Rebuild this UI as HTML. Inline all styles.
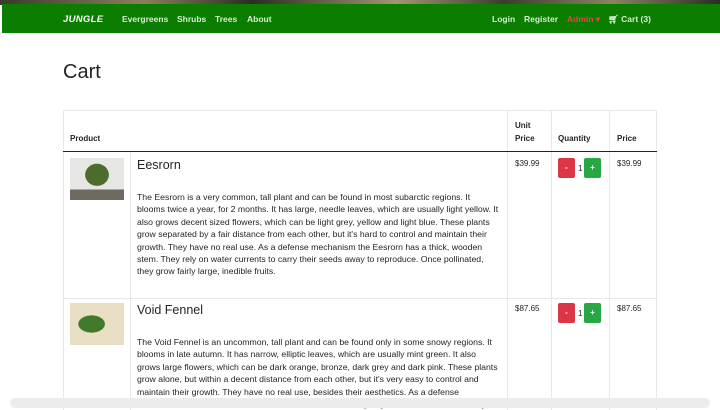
<!DOCTYPE html>
<html><head><meta charset="utf-8"><style>
*{margin:0;padding:0;box-sizing:border-box}
body{width:720px;height:405px;overflow:hidden;background:#fff;font-family:"Liberation Sans",sans-serif;color:#212529;position:relative}
.strip{position:absolute;left:0;top:0;width:720px;height:5px;background:linear-gradient(90deg,#3a3b2c,#8a7f5d 20%,#2b2d22 35%,#a09670 55%,#3c3d30 70%,#8b8360 85%,#2b2c25)}
.nav{position:absolute;left:2px;top:4px;width:718px;height:29px;background:#0b7d00;color:#d6ecd3;font-size:8.5px;font-weight:bold}
.nav span{position:absolute;top:10px}
.logo{color:#fff;font-style:italic;font-weight:900;font-size:9.5px;letter-spacing:.3px}
h1{position:absolute;left:63px;top:61px;font-size:20px;font-weight:normal}
.tbl{position:absolute;left:63px;top:110px;width:594px;height:300px;border-top:1px solid #e8e8e8}
.v{position:absolute;top:0;bottom:0;width:1px;background:#e8e8e8}
.th{position:absolute;font-size:8px;font-weight:bold;line-height:13px}
.hl{position:absolute;left:0;top:40px;width:594px;height:1px;background:#222}
.rl{position:absolute;left:0;top:187px;width:594px;height:1px;background:#e8e8e8}
.t{position:absolute;font-size:12.5px}
.d{position:absolute;left:74px;font-size:8.7px;line-height:12.4px;white-space:nowrap}
.p{position:absolute;font-size:8px}
.b{position:absolute;width:17px;height:20px;border-radius:2px;color:#fff;font-size:8px;font-weight:bold;text-align:center;line-height:20px}
.r{background:#dc3545}.g{background:#28a745}
.q{position:absolute;font-size:8px}
.img{position:absolute;left:7px;width:54px;height:42px}
.bar{position:absolute;left:10px;top:398px;width:700px;height:10px;background:#ececec;border-radius:6px}
</style></head><body>
<div class="strip"></div>
<div class="nav">
<span class="logo" style="left:61px">JUNGLE</span>
<span style="left:120px">Evergreens</span><span style="left:175px">Shrubs</span><span style="left:213px">Trees</span><span style="left:245px">About</span>
<span style="left:490px">Login</span><span style="left:522px">Register</span><span style="left:565px;color:#e0454a">Admin ▾</span><span style="left:606px">🛒︎ Cart (3)</span>
</div>
<h1>Cart</h1>
<div class="tbl">
<div class="v" style="left:0"></div><div class="v" style="left:67px;top:41px"></div><div class="v" style="left:444px"></div><div class="v" style="left:488px"></div><div class="v" style="left:546px"></div><div class="v" style="left:593px"></div>
<div class="th" style="left:7px;top:21px">Product</div>
<div class="th" style="left:452px;top:8px">Unit<br>Price</div>
<div class="th" style="left:495px;top:21px">Quantity</div>
<div class="th" style="left:554px;top:21px">Price</div>
<div class="hl"></div>
<div class="img" style="top:47px;background:radial-gradient(ellipse at 50% 40%,#4d6b2a 0 30%,transparent 32%),linear-gradient(#e6e6e4 75%,#6f6a60 75%)"></div>
<div class="t" style="left:74px;top:47px">Eesrorn</div>
<div class="d" style="top:80px">The Eesrorn is a very common, tall plant and can be found in most subarctic regions. It<br>blooms twice a year, for 2 months. It has large, needle leaves, which are usually light yellow. It<br>also grows decent sized flowers, which can be light grey, yellow and light blue. These plants<br>grow separated by a fair distance from each other, but it's hard to control and maintain their<br>growth. They have no real use. As a defense mechanism the Eesrorn has a thick, wooden<br>stem. They rely on water currents to carry their seeds away to reproduce. Once pollinated,<br>they grow fairly large, inedible fruits.</div>
<div class="p" style="left:452px;top:48px">$39.99</div>
<div class="b r" style="left:495px;top:47px">-</div><div class="q" style="left:515px;top:53px">1</div><div class="b g" style="left:521px;top:47px">+</div>
<div class="p" style="left:554px;top:48px">$39.99</div>
<div class="rl"></div>
<div class="img" style="top:192px;background:radial-gradient(ellipse at 40% 50%,#3f7a2a 0 28%,transparent 30%),#e9dfc4"></div>
<div class="t" style="left:74px;top:192px">Void Fennel</div>
<div class="d" style="top:225px">The Void Fennel is an uncommon, tall plant and can be found only in some snowy regions. It<br>blooms in late autumn. It has narrow, elliptic leaves, which are usually mint green. It also<br>grows large flowers, which can be dark orange, bronze, dark grey and dark pink. These plants<br>grow alone, but within a decent distance from each other, but it's very easy to control and<br>maintain their growth. They have no real use, besides their aesthetics. As a defense<br>mechanism the Void Fennel has a thick, wooden stem. They rely on water currents to carry</div>
<div class="p" style="left:452px;top:193px">$87.65</div>
<div class="b r" style="left:495px;top:192px">-</div><div class="q" style="left:515px;top:198px">1</div><div class="b g" style="left:521px;top:192px">+</div>
<div class="p" style="left:554px;top:193px">$87.65</div>
</div>
<div class="bar"></div>
</body></html>
